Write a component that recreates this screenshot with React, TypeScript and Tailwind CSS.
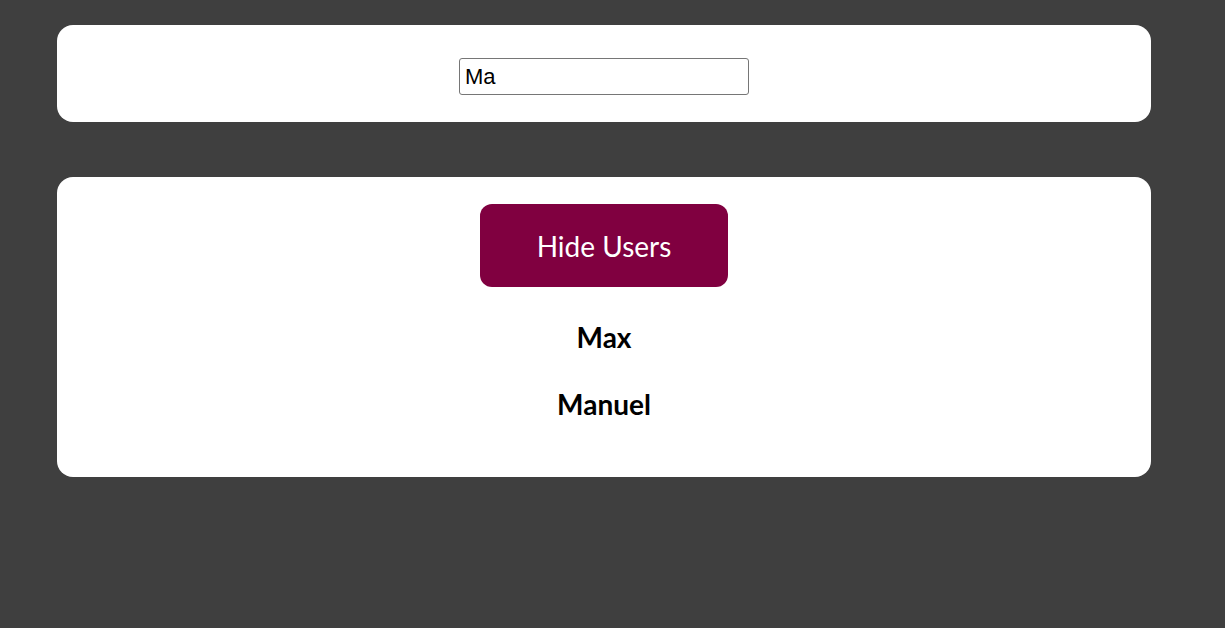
import { useState } from "react";

const users = ["Max", "Manuel"];

export default function App() {
  const [query, setQuery] = useState("Ma");
  const [shown, setShown] = useState(true);

  return (
    <div className="min-h-[628px] bg-[#3f3f3f] pt-[25px] pl-[57px] font-['Lato',sans-serif]">
      <div className="w-[1094px] rounded-[16px] bg-white pt-[33px] pb-[27px] flex justify-center">
        <input
          value={query}
          onChange={(e) => setQuery(e.target.value)}
          className="w-[290px] h-[37px] rounded-[3px] border border-[#767676] px-[5px] text-[22px] text-black font-['Liberation_Sans',Arial,sans-serif] outline-none"
        />
      </div>

      <div className="mt-[55px] w-[1094px] rounded-[16px] bg-white pt-[27px] pb-[39px] flex flex-col items-center">
        <button
          onClick={() => setShown(!shown)}
          className="w-[248px] h-[83px] rounded-[12px] bg-[#800040] text-white text-[28px]"
        >
          {shown ? "Hide Users" : "Show Users"}
        </button>
        {shown && (
          <ul className="mt-[17px] flex flex-col items-center">
            {users
              .filter((u) => u.includes(query))
              .map((u) => (
                <li key={u} className="h-[67px] leading-[67px] text-[28px] font-bold text-black">
                  {u}
                </li>
              ))}
          </ul>
        )}
      </div>
    </div>
  );
}
